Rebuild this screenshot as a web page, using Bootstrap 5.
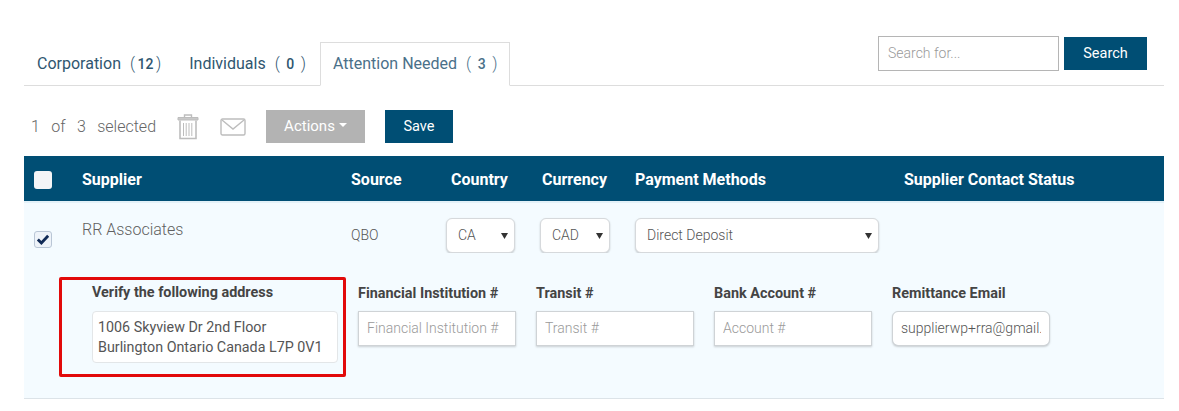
<!DOCTYPE html>
<html lang="en">
<head>
  <meta charset="UTF-8">
  <meta name="viewport" content="width=device-width, initial-scale=1.0">
  <title>Suppliers</title>
  <link href="https://cdn.jsdelivr.net/npm/bootstrap@5.3.2/dist/css/bootstrap.min.css" rel="stylesheet">
  <style>
    body {
      font-family: 'Roboto', sans-serif;
      background-color: #ffffff;
      margin: 0;
      color: #555555;
    }

    .page-wrap {
      width: 1140px;
      margin-left: 24px;
      padding-top: 36px;
    }

    /* tabs + search */
    .tab-head {
      height: 50px;
      border-bottom: 1px solid #dddddd;
    }

    .tab-head .nav-tabs {
      border: 0;
      padding-top: 6px;
    }

    .tab-head .nav-link {
      height: 44px;
      padding: 9px 13px 0 12px;
      font-size: 16px;
      color: #2f5670;
      border-radius: 0;
      margin: 0;
    }

    .tab-head .nav-item:first-child .nav-link {
      padding-right: 14px;
    }

    .tab-head .nav-link.active {
      color: #4a7089;
      border-color: #dddddd #dddddd #ffffff;
      padding: 9px 12px 0 12px;
    }

    .tab-count {
      font-size: 14px;
      font-weight: 500;
      margin-left: 5px;
    }

    .tab-count span {
      font-weight: 300;
      font-size: 16px;
    }

    .tab-count b {
      display: inline-block;
      width: 21px;
      text-align: center;
      font-weight: 500;
    }

    .search-box {
      padding-right: 17px;
      gap: 5px;
    }

    .search-box .form-control {
      width: 181px;
      height: 35px;
      border: 1px solid #b5b5b5;
      border-radius: 0;
      font-size: 14px;
      font-weight: 300;
      padding: 0 9px 2px;
    }

    .search-box .form-control::placeholder,
    .info-field .form-control::placeholder {
      color: #9a9a9a;
      font-weight: 300;
    }

    .btn-navy {
      background-color: #004e74;
      color: #ffffff;
      border: 0;
      border-radius: 0;
      font-size: 14.5px;
      height: 33px;
      padding: 0;
    }

    .btn-navy:hover {
      background-color: #003f5e;
      color: #ffffff;
    }

    .search-box .btn-navy {
      width: 83px;
    }

    /* toolbar */
    .tool-bar {
      height: 33px;
      margin-top: 24px;
      margin-bottom: 13px;
      padding-left: 7px;
      font-size: 16px;
      font-weight: 300;
      color: #666666;
    }

    .sel-count {
      width: 146px;
      word-spacing: 7.5px;
    }

    .trash-icon {
      margin-right: 21px;
    }

    .btn-actions {
      width: 99px;
      height: 33px;
      margin-left: 20px;
      margin-right: 20px;
      padding: 0;
      background-color: #b3b3b3;
      color: #ffffff;
      border: 0;
      border-radius: 0;
      font-size: 15px;
    }

    .btn-actions.dropdown-toggle::after {
      margin-left: 4px;
      border-top-width: 4px;
      border-left-width: 4px;
      border-right-width: 4px;
    }

    .tool-bar .btn-navy {
      width: 68px;
    }

    /* table */
    .supplier-table {
      width: 1140px;
      table-layout: fixed;
      border-collapse: collapse;
    }

    .supplier-table thead tr {
      background-color: #004e74;
      color: #ffffff;
    }

    .supplier-table th {
      height: 45px;
      padding: 2px 0 0;
      font-size: 16px;
      font-weight: 700;
      vertical-align: middle;
    }

    .supplier-table .pad-hd {
      padding-left: 5px;
    }

    .supplier-table .pad-hd-sm {
      padding-left: 2px;
    }

    .supplier-table tbody tr {
      background-color: #f4fbff;
    }

    .supplier-table tbody {
      border-bottom: 1px solid #dce3e8;
    }

    .supplier-table td {
      padding: 17px 0 0;
      vertical-align: top;
      font-size: 14px;
      font-weight: 300;
    }

    .supplier-table tbody tr:first-child td {
      box-shadow: inset 0 2px 0 #e3f1f8;
    }

    .check-cell {
      padding-left: 10px !important;
    }

    .form-check-input.box-hd {
      width: 18px;
      height: 18px;
      margin: 0 0 0 10px;
      border: 0;
      border-radius: 3px;
      display: block;
      background-color: #f4f5f7;
    }

    .form-check-input.box-row {
      width: 18px;
      height: 17px;
      margin: 13px 0 0;
      border: 1px solid #b9c6d6;
      border-radius: 3px;
      display: block;
    }

    .form-check-input.box-row:checked {
      background-color: #eef3f9;
      border-color: #b9c6d6;
      background-size: 16px 15px;
      background-image: url("data:image/svg+xml,%3csvg xmlns='http://www.w3.org/2000/svg' viewBox='0 0 16 16'%3e%3cpath fill='none' stroke='%23102a56' stroke-width='3' d='M2.500 8l3.800 3.800L13.500 4'/%3e%3c/svg%3e");
    }

    .supplier-name {
      font-size: 16px;
      line-height: 22px;
      margin-top: 1px;
      color: #606060;
    }

    .source-text {
      line-height: 35px;
      color: #555555;
    }

    .supplier-table .form-select {
      height: 35px;
      padding: 0 10px 0 11px;
      font-size: 14px;
      font-weight: 300;
      color: #555555;
      border: 1px solid #d6d9dc;
      border-radius: 6px;
      box-shadow: 0 1px 2px rgba(0, 0, 0, 0.2);
      background-size: 7px 6px;
      background-position: right 6px center;
      background-image: url("data:image/svg+xml,%3csvg xmlns='http://www.w3.org/2000/svg' viewBox='0 0 7 6'%3e%3cpath fill='%23333333' d='M0 0h7L3.500 6z'/%3e%3c/svg%3e");
    }

    .sel-ca { width: 69px; }
    .sel-cad { width: 70px; }
    .sel-pay { width: 244px; }

    .detail-cell {
      padding: 24px 0 21px 35px !important;
    }

    .verify-box {
      width: 287px;
      height: 100px;
      border: 3px solid #e20a0a;
      border-radius: 2px;
      padding: 3px 5px 0 30px;
      margin-right: 12px;
    }

    .info-field {
      width: 158px;
      margin-right: 20px;
    }

    .info-label {
      font-size: 14.4px;
      font-weight: 700;
      color: #444444;
      line-height: 20px;
      margin-bottom: 8px;
    }

    .detail-cols {
      padding-top: 7px;
    }

    .detail-cols .info-label {
      margin-bottom: 7px;
    }

    .address-box {
      height: 52px;
      padding: 5px 5px;
      background-color: #ffffff;
      border: 1px solid #e3e6e8;
      border-radius: 4px;
      font-size: 14.3px;
      font-weight: 400;
      line-height: 20px;
      color: #555555;
      white-space: nowrap;
    }

    .info-field .form-control {
      height: 35px;
      padding: 0 8px 2px;
      font-size: 14px;
      font-weight: 300;
      color: #555555;
      border: 1px solid #cfd3d6;
      border-radius: 0;
      box-shadow: 0 1px 2px rgba(0, 0, 0, 0.18);
    }

    .info-field .round-input {
      border-radius: 6px;
    }
  </style>
</head>
<body>
  <div class="page-wrap">
    <!-- Tabs and search -->
    <div class="tab-head d-flex justify-content-between align-items-start">
      <ul class="nav nav-tabs">
        <li class="nav-item"><a class="nav-link" href="#">Corporation <span class="tab-count"><span>(</span><b>12</b><span>)</span></span></a></li>
        <li class="nav-item"><a class="nav-link" href="#">Individuals <span class="tab-count"><span>(</span><b>0</b><span>)</span></span></a></li>
        <li class="nav-item"><a class="nav-link active" href="#">Attention Needed <span class="tab-count"><span>(</span><b>3</b><span>)</span></span></a></li>
      </ul>
      <form class="search-box d-flex align-items-center">
        <input type="text" class="form-control" placeholder="Search for...">
        <button type="button" class="btn btn-navy">Search</button>
      </form>
    </div>

    <!-- Toolbar -->
    <div class="tool-bar d-flex align-items-center">
      <span class="sel-count">1 of 3 selected</span>
      <svg width="22" height="26" viewBox="0 0 22 26" fill="none" stroke="#bdbdbd" class="trash-icon">
        <path d="M7.500 3V1h7v2" stroke-width="1.400"/>
        <path d="M1 3.500h20v2.500H1z" fill="#c9c9c9" stroke-width="1"/>
        <path d="M3 6.500v18h16v-18" stroke-width="1.600"/>
        <path d="M6.500 9v13M9.200 9v13M12 9v13M14.800 9v13" stroke-width="1"/>
      </svg>
      <svg width="26" height="18" viewBox="0 0 26 18" fill="none" stroke="#bdbdbd" stroke-width="1.400">
        <rect x="1" y="1" width="24" height="16" rx="1.500"/>
        <path d="M2 2l11 9 11-9"/>
      </svg>
      <div class="dropdown">
        <button type="button" class="btn btn-actions dropdown-toggle" data-bs-toggle="dropdown">Actions</button>
        <ul class="dropdown-menu">
          <li><a class="dropdown-item" href="#">Delete</a></li>
          <li><a class="dropdown-item" href="#">Send email</a></li>
        </ul>
      </div>
      <button type="button" class="btn btn-navy">Save</button>
    </div>

    <!-- Suppliers -->
    <table class="supplier-table">
      <colgroup>
        <col style="width: 58px">
        <col style="width: 269px">
        <col style="width: 95px">
        <col style="width: 94px">
        <col style="width: 95px">
        <col style="width: 269px">
        <col style="width: 260px">
      </colgroup>
      <thead>
        <tr>
          <th><input type="checkbox" class="form-check-input box-hd" aria-label="Select all"></th>
          <th>Supplier</th>
          <th>Source</th>
          <th class="pad-hd">Country</th>
          <th class="pad-hd-sm">Currency</th>
          <th>Payment Methods</th>
          <th>Supplier Contact Status</th>
        </tr>
      </thead>
      <tbody>
        <tr>
          <td class="check-cell"><input type="checkbox" class="form-check-input box-row" aria-label="Select RR Associates" checked></td>
          <td><div class="supplier-name">RR Associates</div></td>
          <td><div class="source-text">QBO</div></td>
          <td><select class="form-select sel-ca" aria-label="Country"><option>CA</option></select></td>
          <td><select class="form-select sel-cad" aria-label="Currency"><option>CAD</option></select></td>
          <td><select class="form-select sel-pay" aria-label="Payment method"><option>Direct Deposit</option></select></td>
          <td></td>
        </tr>
        <tr>
          <td colspan="7" class="detail-cell">
            <div class="d-flex">
              <div class="verify-box">
                <div class="info-label">Verify the following address</div>
                <div class="address-box">1006 Skyview Dr 2nd Floor<br>Burlington Ontario Canada L7P 0V1</div>
              </div>
              <div class="info-field detail-cols">
                <div class="info-label">Financial Institution #</div>
                <input type="text" class="form-control" placeholder="Financial Institution #">
              </div>
              <div class="info-field detail-cols">
                <div class="info-label">Transit #</div>
                <input type="text" class="form-control" placeholder="Transit #">
              </div>
              <div class="info-field detail-cols">
                <div class="info-label">Bank Account #</div>
                <input type="text" class="form-control" placeholder="Account #">
              </div>
              <div class="info-field detail-cols">
                <div class="info-label">Remittance Email</div>
                <input type="text" class="form-control round-input" value="supplierwp+rra@gmail.com">
              </div>
            </div>
          </td>
        </tr>
      </tbody>
    </table>
  </div>
  <script src="https://cdn.jsdelivr.net/npm/bootstrap@5.3.2/dist/js/bootstrap.bundle.min.js"></script>
</body>
</html>
